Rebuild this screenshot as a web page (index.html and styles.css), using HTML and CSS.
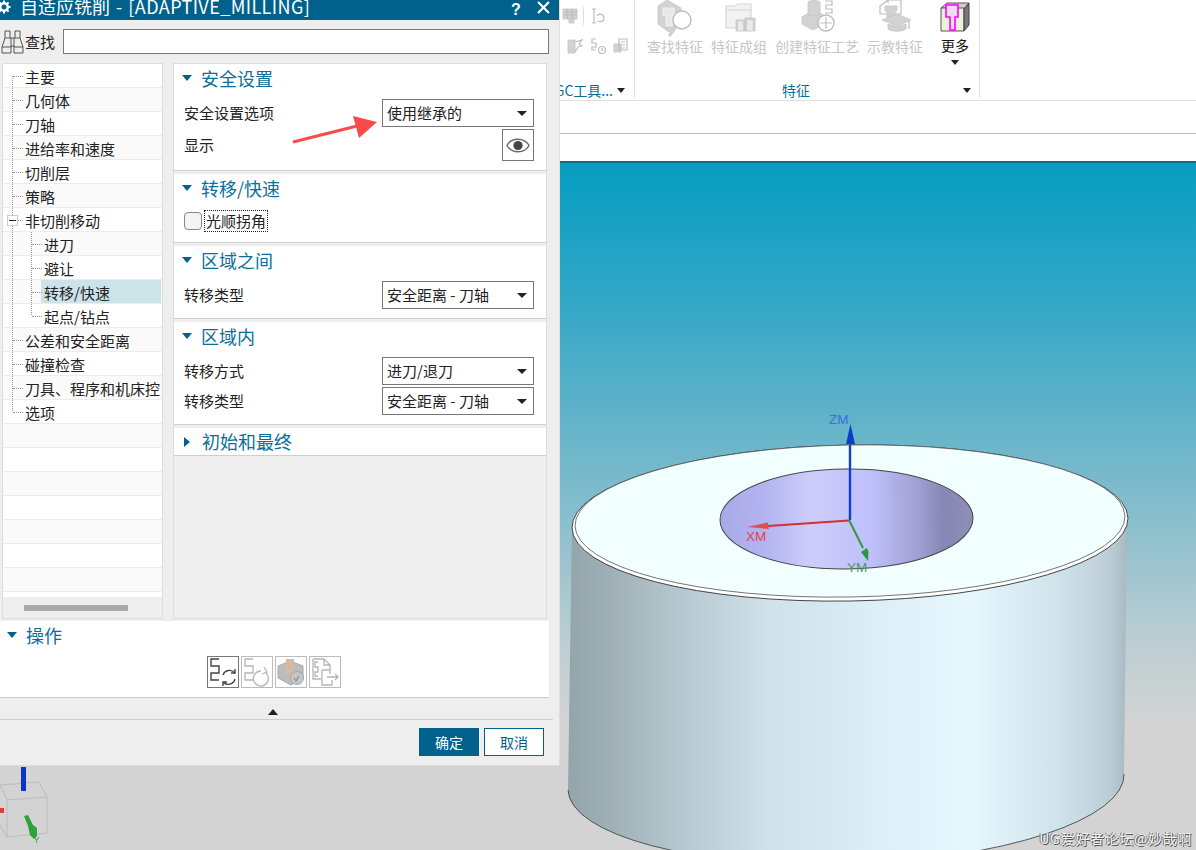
FILE: index.html
```html
<!DOCTYPE html>
<html lang="zh">
<head>
<meta charset="utf-8">
<title>自适应铣削</title>
<link rel="stylesheet" href="styles.css">
</head>
<body>
<div class="desktop">
  <header class="ribbon">
    <section class="group group-tools">
      <div class="tool-row tool-row-a">
        <svg class="mini" viewBox="0 0 16 16"><path class="dis-fill" d="M1 1h14v10H1z"/><path class="dis-line" d="M1 4h14M1 7h14M5 1v10M10 1v10"/><path class="dis-fill" d="M7 11h5v4H7z"/></svg>
        <span class="tool-sep"></span>
        <svg class="mini" viewBox="0 0 16 16"><path class="dis-line" d="M2 1h4M2 15h4M4 1v14M7 8c2-3 7-2 7 2s-4 4-7 3"/></svg>
      </div>
      <div class="tool-row tool-row-b">
        <svg class="mini" viewBox="0 0 16 16"><path class="dis-fill" d="M1 2h7v13H1z"/><path class="dis-line" d="M8 4l7-2-3 4 3 2-4 1-3 5"/></svg>
        <svg class="mini" viewBox="0 0 16 16"><path class="dis-line" d="M6 1H2v4h4v4H2v3h4"/><circle class="dis-line" cx="12" cy="12" r="3.5"/><path class="dis-line" d="M12 10v2h1.5"/></svg>
        <svg class="mini" viewBox="0 0 16 16"><path class="dis-fill" d="M1 6h7v8H1z"/><path class="dis-line" d="M6 1h8v11H6zM8 4h4M8 7h4M8 10h4"/></svg>
      </div>
      <div class="group-label group-label-tools"><span>UGC工具...</span><i class="caret"></i></div>
    </section>
    <section class="group group-feature">
      <div class="feature-items">
        <div class="item">
          <svg class="big" viewBox="0 0 36 37"><path class="dis-fill" d="M1 6 10 0l14 8v16l-12 8-11-8z"/><path class="dis-line light" d="M6 8h11v7h-2v11H9V15H6z"/><path class="dis-thick" d="M19 27l-7 9"/><circle class="lens" cx="25" cy="20" r="9"/></svg>
          <span class="item-label">查找特征</span>
        </div>
        <div class="item">
          <svg class="big" viewBox="0 0 36 37"><path class="dis-pale" d="M5 6h9l3-2h13v24H5z"/><path class="dis-line soft" d="M5 6h9l3-2h13v24H5zM5 10h25"/><path class="dis-fill" d="M15 20h9v11h-9zM24 18h10v13H24z"/><path class="dis-line light" d="M18 22h3v8h-3zM27 21h4v9h-4z"/></svg>
          <span class="item-label">特征成组</span>
        </div>
        <div class="item">
          <svg class="big" viewBox="0 0 36 37"><path class="dis-fill" d="M3 17 15 10l13 7v6L14 30 3 24z"/><path class="dis-fill" d="M9 2c2-2 10-2 12 0v12c-3 2-9 2-12 0z"/><path class="dis-line" d="M26 1h7v4h-6v4h6v4h-7"/><circle class="lens" cx="27" cy="23" r="8"/><path class="dis-line" d="M27 17v12M21 23h12"/></svg>
          <span class="item-label">创建特征工艺</span>
        </div>
        <div class="item">
          <svg class="big" viewBox="0 0 36 37"><path class="dis-line" d="M3 6l8-6h13v14H3zM11 0v3"/><path class="dis-fill" d="M8 6h12v5h-2v7H10v-7H8z"/><path class="dis-fill" d="M5 20l15-6 14 6-14 6z"/><path class="dis-fill" d="M11 24v5c5 3 13 3 18 0v-5l-9 3z"/><path class="dis-line" d="M32 21v8"/></svg>
          <span class="item-label">示教特征</span>
        </div>
        <div class="item item-more">
          <svg class="big" viewBox="0 0 30 30"><path class="cube-top" d="M1 6l6-5h22l-5 6z"/><path class="cube-front" d="M1 6h23v23H1z"/><path class="cube-side" d="M24 7l5-6v22l-5 6z"/><path class="cube-cut" d="M6 3h12v12h-3v13H10V15H6z"/></svg>
          <span class="more-label">更多</span>
          <i class="caret caret-more"></i>
        </div>
      </div>
      <div class="group-label group-label-feature"><span class="feature-title">特征</span><i class="caret"></i></div>
    </section>
  </header>
  <div class="bar bar-a"></div>
  <div class="bar bar-b"></div>
  <main class="viewport">
    <svg class="scene" viewBox="0 163 1196 687" aria-label="3D model">
      <defs>
        <linearGradient id="side" x1="0" x2="1" y1="0" y2="0">
          <stop offset="0" stop-color="#93a5ab"/>
          <stop offset="0.08" stop-color="#a0b0b6"/>
          <stop offset="0.2" stop-color="#b6c8cf"/>
          <stop offset="0.36" stop-color="#cfe1e9"/>
          <stop offset="0.55" stop-color="#dceef6"/>
          <stop offset="0.72" stop-color="#e6f7fe"/>
          <stop offset="0.88" stop-color="#cfe2ea"/>
          <stop offset="0.97" stop-color="#bccdd6"/>
          <stop offset="1" stop-color="#a9b9c0"/>
        </linearGradient>
        <linearGradient id="hole" x1="0" x2="1" y1="0" y2="0">
          <stop offset="0" stop-color="#a9a9ea"/>
          <stop offset="0.18" stop-color="#b4b4f2"/>
          <stop offset="0.36" stop-color="#cdcdfb"/>
          <stop offset="0.6" stop-color="#bfbffc"/>
          <stop offset="0.78" stop-color="#a0a0d4"/>
          <stop offset="0.88" stop-color="#8787b6"/>
          <stop offset="1" stop-color="#8e8eb8"/>
        </linearGradient>
      </defs>
      <path class="cyl-side" d="M572 525 L568 790 A278 82 -1.6 0 0 1124 774 L1127 515 Z"/>
      <path class="cyl-edge" d="M568 790 A278 82 -1.6 0 0 1124 774"/>
      <ellipse class="rim" cx="850" cy="523" rx="278" ry="78" transform="rotate(-1 850 523)"/>
      <ellipse class="face" cx="850" cy="521" rx="275" ry="76" transform="rotate(-1 850 521)"/>
      <ellipse class="hole" cx="846.500" cy="519" rx="126.500" ry="50" transform="rotate(-0.5 846 519)"/>
      <path class="ax-blue" d="M850 520V445"/>
      <path class="ax-blue-head" d="M850.500 424l4.500 20h-9z"/>
      <path class="ax-red" d="M849 520.500L768 526"/>
      <path class="ax-red-head" d="M747 527l21-4.500 .8 6.500z"/>
      <path class="ax-green" d="M849 520l14 28"/>
      <path class="ax-green-head" d="M868 561l-7-9 6-4 1.500 4z"/>
      <text class="lbl lbl-z" x="829" y="424">ZM</text>
      <text class="lbl lbl-x" x="746" y="541">XM</text>
      <text class="lbl lbl-y" x="847" y="572">YM</text>
      <path class="tri-cube" d="M0 785 39 782 47 797 7 800zM7 800V837M47 797V833L7 837 0 825"/>
      <path class="tri-blue" d="M21 767h5v24h-5z"/>
      <path class="tri-red" d="M0 808h4v5H0z"/>
      <path class="tri-green" d="M24 816l4-1 5 10 4 3 0 8-3 3-4-4-2-9z"/>
      <path class="tri-green-line" d="M35 836l2 7M37 840l2-3"/>
    </svg>
    <div class="watermark">UG爱好者论坛@妙哉啊</div>
  </main>

  <div class="dialog">
    <div class="titlebar">
      <svg class="gear" viewBox="0 0 14 14"><circle class="gear-ring" cx="7" cy="7" r="3.800"/><path class="gear-teeth" d="M7 .5v3M7 10.500v3M.5 7h3M10.500 7h3M2.400 2.400l2 2M9.600 9.600l2 2M11.600 2.400l-2 2M4.400 9.600l-2 2"/></svg>
      <span class="title-text">自适应铣削 - <span class="title-latin">[ADAPTIVE_MILLING]</span></span>
      <span class="help">?</span>
      <svg class="close" viewBox="0 0 12 12"><path d="M1 1l10 10M11 1 1 11"/></svg>
    </div>
    <div class="search">
      <svg class="binoc" viewBox="0 0 23 24"><path d="M4 1h5v7h5V1h5v7l3 9v6h-9v-7h-3v7H1v-6L4 8z"/><path d="M1 17h9v-9M13 8v9h9M4 8h5M14 8h5"/></svg>
      <span class="search-label">查找</span>
      <div class="search-box"></div>
    </div>
    <div class="dlg-body">
      <nav class="tree">
        <div class="row r1 first"><span class="tx">主要</span></div>
        <div class="row r1 alt"><span class="tx">几何体</span></div>
        <div class="row r1"><span class="tx">刀轴</span></div>
        <div class="row r1 alt"><span class="tx">进给率和速度</span></div>
        <div class="row r1"><span class="tx">切削层</span></div>
        <div class="row r1 alt"><span class="tx">策略</span></div>
        <div class="row r1 parent"><i class="minus"></i><span class="tx">非切削移动</span></div>
        <div class="row r2 alt"><span class="tx">进刀</span></div>
        <div class="row r2"><span class="tx">避让</span></div>
        <div class="row r2 alt selrow"><span class="tx sel">转移/快速</span></div>
        <div class="row r2 lastchild"><span class="tx">起点/钻点</span></div>
        <div class="row r1 alt"><span class="tx">公差和安全距离</span></div>
        <div class="row r1"><span class="tx">碰撞检查</span></div>
        <div class="row r1 alt"><span class="tx">刀具、程序和机床控</span></div>
        <div class="row r1 last"><span class="tx">选项</span></div>
        <div class="row alt"></div>
        <div class="row"></div>
        <div class="row alt"></div>
        <div class="row"></div>
        <div class="row alt"></div>
        <div class="row"></div>
        <div class="row alt"></div>
        <div class="tree-fill"></div>
        <div class="tree-scroll"><i></i></div>
      </nav>
      <div class="panel">
        <section class="sec sec-a">
          <h3 class="sec-h"><i class="tw"></i>安全设置</h3>
          <div class="f-row"><span>安全设置选项</span><div class="select">使用继承的<i class="caret"></i></div></div>
          <div class="f-row f-eye"><span>显示</span>
            <div class="eye-btn"><svg viewBox="0 0 26 16"><path d="M1 8c5-9 19-9 24 0-5 9-19 9-24 0z"/><circle cx="13" cy="8" r="5"/></svg></div>
          </div>
        </section>
        <section class="sec sec-b">
          <h3 class="sec-h"><i class="tw"></i>转移/快速</h3>
          <div class="check-row"><i class="check"></i><span class="check-label">光顺拐角</span></div>
        </section>
        <section class="sec sec-c">
          <h3 class="sec-h"><i class="tw"></i>区域之间</h3>
          <div class="f-row"><span>转移类型</span><div class="select">安全距离 - 刀轴<i class="caret"></i></div></div>
        </section>
        <section class="sec sec-d">
          <h3 class="sec-h"><i class="tw"></i>区域内</h3>
          <div class="f-row"><span>转移方式</span><div class="select">进刀/退刀<i class="caret"></i></div></div>
          <div class="f-row"><span>转移类型</span><div class="select">安全距离 - 刀轴<i class="caret"></i></div></div>
        </section>
        <section class="sec sec-e">
          <h3 class="sec-h sec-h-e"><i class="tw tw-closed"></i>初始和最终</h3>
        </section>
      </div>
    </div>
    <section class="ops">
      <h3 class="sec-h ops-h"><i class="tw"></i>操作</h3>
      <div class="ops-btns">
        <div class="op op-on"><svg viewBox="0 0 30 30"><path class="op-dark" d="M11 2H3v7h8v7H3v7h8"/><path class="op-dark" d="M15 18a7 7 0 0 1 12-2M27 22a7 7 0 0 1-12 3"/><path class="op-dark" d="M27 12v4h-4M15 29v-4h4"/></svg></div>
        <div class="op"><svg viewBox="0 0 30 30"><path class="op-grey" d="M11 2H3v7h8v7H3v7h8"/><path class="op-grey" d="M24 16a7.500 7.500 0 1 1-5-2"/><path class="op-grey" d="M22 10l3 5-5 2"/></svg></div>
        <div class="op"><svg viewBox="0 0 30 30"><path class="op-solid" d="M2 9l12-5 13 5v12L15 28 2 21z"/><path class="op-tan" d="M10 2h8v16h-8z"/><circle class="op-badge" cx="21" cy="21" r="6.500"/><path class="op-check" d="M18 21l2 3 3-5"/></svg></div>
        <div class="op"><svg viewBox="0 0 30 30"><path class="op-grey" d="M3 2h11l6 6v5M3 2v20h8M8 5H5v5h3v5H5v4h3M14 2v6h6"/><path class="op-grey" d="M12 13h8v4M12 13v15h10v-5"/><path class="op-grey" d="M17 20h11M25 17l3 3-3 3"/></svg></div>
      </div>
    </section>
    <div class="expander"><i></i></div>
    <footer class="actions">
      <button class="btn btn-ok">确定</button>
      <button class="btn">取消</button>
    </footer>
  </div>

  <svg class="annot" viewBox="0 0 100 40" aria-hidden="true"><path class="annot-line" d="M1 28 65 12"/><path class="annot-head" d="M85 8 61 2 67 24z"/></svg>
</div>
</body>
</html>
```

FILE: styles.css
```css
* { box-sizing: border-box; }
html, body { margin: 0; padding: 0; }
body {
  font-family: "Noto Sans CJK SC", "Noto Sans", sans-serif;
  font-size: 15px;
  color: #222;
}
.desktop {
  position: relative;
  width: 1196px;
  height: 850px;
  overflow: hidden;
  background: #fff;
  display: flex;
  flex-direction: column;
}

/* ribbon */
.ribbon {
  height: 101px;
  display: flex;
  border-bottom: 1px solid #e0e0e0;
  background: #fff;
  flex: none;
  padding-bottom: 2px;
}
.group { display: flex; flex-direction: column; position: relative; border-right: 1px solid #e2e2e2; }
.group-tools { width: 635px; }
.group-feature { width: 345px; }
.tool-row { display: flex; align-items: center; height: 16px; }
.tool-row-a { padding-left: 562px; margin-top: 8px; gap: 5px; }
.tool-row-b { padding-left: 567px; margin-top: 14px; gap: 7px; }
.tool-sep { width: 1px; height: 18px; background: #ddd; margin-right: 1px; }
.mini { width: 16px; height: 16px; display: block; }
.dis-fill { fill: #d2d2d2; stroke: #c4c4c4; stroke-width: .8; }
.dis-pale { fill: #f2f2f2; }
.dis-line { fill: none; stroke: #bdbdbd; stroke-width: 1.2; }
.dis-line.soft { stroke: #d6d6d6; }
.dis-line.light { stroke: #f0f0f0; fill: #e8e8e8; }
.dis-thick { fill: none; stroke: #cfcfcf; stroke-width: 3; }
.lens { fill: #fff; stroke: #bdbdbd; stroke-width: 1.4; }
.group-label {
  margin-top: auto;
  height: 16px;
  display: flex;
  align-items: center;
  font-size: 14px;
  line-height: 16px;
  color: #0a6f99;
}
.group-label-tools { justify-content: flex-end; padding-right: 9px; gap: 4px; white-space: nowrap; }
.group-label-feature { padding-right: 8px; }
.feature-title { flex: 1; text-align: center; padding-right: 6px; }
.caret {
  display: block;
  width: 0;
  height: 0;
  border-left: 4.5px solid transparent;
  border-right: 4.5px solid transparent;
  border-top: 5px solid #222;
}
.feature-items { display: flex; gap: 8px; padding-left: 12px; }
.item { display: flex; flex-direction: column; align-items: center; }
.big { width: 36px; height: 37px; display: block; flex: none; }
.item-more { margin-left: 10px; width: 28px; }
.item-more .big { width: 30px; height: 30px; margin: 2px 0 4px; }
.item-label { font-size: 14px; line-height: 18px; color: #c6c6c6; white-space: nowrap; }
.more-label { font-size: 14px; line-height: 18px; color: #111; white-space: nowrap; }
.caret-more { margin-top: 6px; }
.cube-top { fill: #cfcfcf; stroke: #555; }
.cube-front { fill: #eef0dc; stroke: #555; }
.cube-side { fill: #777; stroke: #444; }
.cube-cut { fill: #f3dcf3; stroke: #f0f; stroke-width: 1.6; }

.bar { flex: none; background: #fff; }
.bar-a { height: 33px; border-bottom: 1px solid #bdbdbd; }
.bar-b { height: 27px; }

/* 3D viewport */
.viewport {
  position: relative;
  flex: 1;
  border-top: 2px solid #0f6b8f;
  background: linear-gradient(#069dc1 0, #2ba6c6 120px, #5fb2c9 250px, #8fc0ce 370px, #b9cdd2 470px, #d3d3d3 560px);
}
.scene { display: block; width: 1196px; height: 687px; }
.cyl-side { fill: url(#side); }
.cyl-edge { fill: none; stroke: #3f4a4d; stroke-width: .9; }
.rim { fill: #fff; stroke: #333; stroke-width: .9; }
.face { fill: #f1ffff; stroke: #555; stroke-width: .8; }
.hole { fill: url(#hole); stroke: #444; stroke-width: 1; }
.ax-blue { stroke: #1040d0; stroke-width: 2.400; fill: none; }
.ax-blue-head { fill: #0a3fc8; }
.ax-red { stroke: #d43030; stroke-width: 2; fill: none; }
.ax-red-head { fill: #e05050; }
.ax-green { stroke: #2e9a3a; stroke-width: 2; fill: none; }
.ax-green-head { fill: #2a9a38; }
.lbl { font-family: "Liberation Sans", sans-serif; font-size: 13.500px; }
.lbl-z { fill: #3a6fe0; }
.lbl-x { fill: #d84848; }
.lbl-y { fill: #4f9a5c; }
.tri-cube { fill: none; stroke: #bbb; stroke-width: 1; }
.tri-blue { fill: #0a35c8; }
.tri-red { fill: #e03c3c; }
.tri-green { fill: #2da33a; }
.tri-green-line { fill: none; stroke: #3aa846; stroke-width: 1; }
.watermark {
  position: absolute;
  right: 4px;
  bottom: 3px;
  font-size: 14px;
  line-height: 18px;
  letter-spacing: .7px;
  color: #f2f2f2;
  white-space: nowrap;
  text-shadow: 1px 1px 0 #555, -1px 0 0 #777;
}

/* dialog window */
.dialog {
  position: absolute;
  left: 0;
  top: -6px;
  width: 560px;
  height: 772px;
  background: #eee;
  border-right: 1px solid #ddd;
  border-bottom: 1px solid #ddd;
  display: flex;
  flex-direction: column;
}
.titlebar {
  height: 26px;
  flex: none;
  background: #00628c;
  color: #fff;
  display: flex;
  align-items: center;
  position: relative;
}
.gear { position: absolute; left: -3px; top: 6px; width: 14px; height: 14px; }
.gear-ring { fill: none; stroke: #fff; stroke-width: 2.600; }
.gear-teeth { fill: none; stroke: #fff; stroke-width: 2; }
.title-text { margin-left: 20px; font-size: 18px; line-height: 24px; margin-bottom: 2px; white-space: nowrap; flex: 1; word-spacing: 2px; }
.title-latin { letter-spacing: .42px; }
.help { font-family: "Liberation Sans", sans-serif; font-weight: 700; font-size: 16px; line-height: 14px; margin-top: 6px; width: 20px; text-align: center; margin-right: 7px; }
.close { width: 13px; height: 13px; margin-right: 9px; margin-left: 4px; margin-top: 1px; flex: none; }
.close path { fill: none; stroke: #fff; stroke-width: 2; }
.search {
  height: 43px;
  flex: none;
  display: flex;
  align-items: center;
  padding: 0 10px 0 1px;
}
.binoc { width: 23px; height: 24px; flex: none; }
.binoc path { fill: none; stroke: #555; stroke-width: 1; }
.search-label { margin-left: 1px; width: 38px; line-height: 20px; }
.search-box { flex: 1; height: 25px; background: #fff; border: 1px solid #777; margin-top: -1px; }
.dlg-body { display: flex; height: 556px; flex: none; padding-left: 2px; gap: 10px; }

/* navigation tree */
.tree {
  width: 161px;
  height: 556px;
  background: #fff;
  border: 1px solid #ddd;
  display: flex;
  flex-direction: column;
}
.row {
  height: 24px;
  flex: none;
  display: flex;
  align-items: center;
  position: relative;
  border-bottom: 1px solid #ececec;
  padding-top: 2px;
  overflow: hidden;
  --dots: repeating-linear-gradient(#999 0 1px, transparent 1px 2px);
}
.row.alt { background-color: #fafafa; }
.row.r1 {
  padding-left: 22px;
  background-image: var(--dots);
  background-size: 1px 100%;
  background-position: 9px 0;
  background-repeat: no-repeat;
}
.row.r1.first { background-size: 1px 50%; background-position: 9px 100%; }
.row.r1.last { background-size: 1px 50%; background-position: 9px 0; }
.row.r2 {
  padding-left: 41px;
  background-image: var(--dots), var(--dots);
  background-size: 1px 100%, 1px 100%;
  background-position: 9px 0, 28px 0;
  background-repeat: no-repeat;
}
.row.r2.lastchild { background-size: 1px 100%, 1px 50%; }
.row.r1::before, .row.r2::before {
  content: "";
  position: absolute;
  top: 12px;
  width: 10px;
  border-top: 1px dotted #999;
}
.row.r1::before { left: 10px; }
.row.r2::before { left: 29px; }
.tx { line-height: 22px; white-space: nowrap; }
.row.selrow { padding-top: 0; }
.selrow::before { z-index: 1; }
.tx.sel { flex: 1; align-self: stretch; background: #cce3ea; padding: 2px 0 0 3px; margin-left: -3px; margin-right: 1px; line-height: 21px; }
.minus {
  position: absolute;
  left: 4px;
  top: 7px;
  width: 11px;
  height: 11px;
  background: #fff;
  border: 1px solid #ccc;
  z-index: 1;
}
.minus::after { content: ""; position: absolute; left: 1px; right: 1px; top: 4px; border-top: 1px solid #222; }
.tree-fill { flex: 1; background: #fff; }
.tree-scroll { height: 21px; flex: none; background: #eee; display: flex; align-items: center; padding-left: 21px; }
.tree-scroll i { display: block; width: 104px; height: 6px; background: #a9a9a9; }

/* right panel */
.panel {
  width: 374px;
  height: 556px;
  border: 1px solid #ddd;
  background: #eee;
  display: flex;
  flex-direction: column;
}
.sec { background: #fff; border-bottom: 1px solid #cfcfcf; padding: 0 12px 0 10px; margin-bottom: 3px; flex: none; }
.sec-h {
  margin: 0;
  height: 30px;
  display: flex;
  align-items: center;
  font-size: 18px;
  font-weight: 400;
  line-height: 28px;
  padding-bottom: 2px;
  color: #0a6f99;
}
.sec-h-e { height: 27px; padding-bottom: 0; line-height: 27px; }
.tw {
  display: block;
  width: 0;
  height: 0;
  border-left: 5.5px solid transparent;
  border-right: 5.5px solid transparent;
  border-top: 6px solid #00628c;
  margin-left: -2px;
  margin-right: 9px;
  flex: none;
}
.tw-closed { border-top: 5.5px solid transparent; border-bottom: 5.5px solid transparent; border-left: 6px solid #00628c; border-right: 0; margin-left: 0; margin-right: 12px; }
.sec-a { padding-bottom: 9px; }
.sec-b { padding-bottom: 10px; }
.sec-c { padding-bottom: 9px; }
.sec-d { padding-bottom: 9px; }
.sec > .f-row:nth-child(2) { margin-top: 5px; }
.f-row { display: flex; justify-content: space-between; align-items: center; min-height: 28px; margin-top: 2px; line-height: 20px; }
.f-eye { min-height: 32px; }
.select {
  width: 152px;
  height: 28px;
  border: 1px solid #777;
  background: #fff;
  display: flex;
  align-items: center;
  justify-content: space-between;
  padding: 0 6px 0 4px;
  font-size: 15px;
  white-space: nowrap;
}
.select .caret { border-left-width: 5px; border-right-width: 5px; border-top-width: 5.5px; }
.eye-btn { width: 32px; height: 32px; border: 1px solid #777; display: flex; align-items: center; justify-content: center; background: #fff; }
.eye-btn svg { width: 24px; height: 15px; display: block; }
.eye-btn path { fill: #fff; stroke: #666; stroke-width: 1.5; }
.eye-btn circle { fill: #444; }
.check-row { display: flex; align-items: center; margin-top: 6px; height: 22px; }
.check { display: block; width: 18px; height: 18px; border: 1px solid #888; border-radius: 4px; background: #f4f4f4; }
.check-label { border: 1px dotted #222; margin-left: 2px; padding: 0 1px; line-height: 20px; height: 22px; }

/* operations */
.ops { width: 549px; height: 77px; margin-top: 2px; background: #fff; border-bottom: 1px solid #ccc; flex: none; padding-left: 9px; }
.ops-btns { display: flex; gap: 2px; justify-content: center; margin-top: 5px; padding-right: 10px; }
.op { width: 32px; height: 32px; border: 1px solid #bbb; display: flex; align-items: center; justify-content: center; background: #fff; }
.op svg { width: 30px; height: 30px; display: block; }
.op-on { border-color: #777; }
.op-dark { fill: none; stroke: #444; stroke-width: 1.4; }
.op-grey { fill: none; stroke: #b5b5b5; stroke-width: 1.3; }
.op-solid { fill: #bdbdbd; stroke: #a8a8a8; }
.op-tan { fill: #d6b9a4; }
.op-badge { fill: #c6c6c6; stroke: #a5a5a5; }
.op-check { fill: none; stroke: #8c8c8c; stroke-width: 1.2; }
.expander { width: 553px; height: 22px; flex: none; border-bottom: 1px solid #ccc; display: flex; justify-content: center; align-items: flex-end; padding: 0 7px 3px 0; }
.expander i { display: block; width: 0; height: 0; border-left: 5.5px solid transparent; border-right: 5.5px solid transparent; border-bottom: 6px solid #222; margin-bottom: 1px; }
.actions { flex: 1; display: flex; justify-content: flex-end; gap: 5px; padding: 8px 15px 0 0; align-items: flex-start; }
.btn {
  width: 60px;
  height: 28px;
  font: inherit;
  font-size: 14px;
  color: #00628c;
  background: #fff;
  border: 1px solid #00628c;
  padding: 0;
  border-radius: 0;
}
.btn-ok { background: #00628c; color: #fff; }

/* red annotation arrow */
.annot { position: absolute; left: 292px; top: 114px; width: 100px; height: 40px; overflow: visible; }
.annot-line { fill: none; stroke: #f94a4a; stroke-width: 3; }
.annot-head { fill: #f94a4a; }
```
